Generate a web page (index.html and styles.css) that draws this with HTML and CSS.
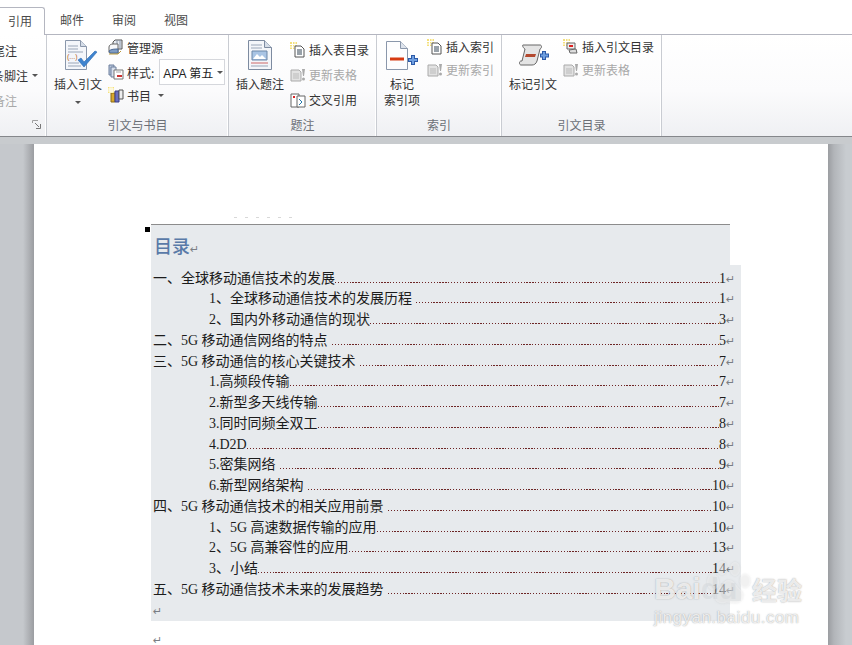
FILE: index.html
```html
<!DOCTYPE html>
<html lang="zh">
<head>
<meta charset="utf-8">
<title>目录</title>
<link rel="stylesheet" href="styles.css">
</head>
<body>
<div class="app">
  <nav class="tabs">
    <div class="tab active">引用</div>
    <div class="tab">邮件</div>
    <div class="tab">审阅</div>
    <div class="tab">视图</div>
  </nav>
  <section class="ribbon">
    <div class="group g1">
      <div class="group-body cut">
        <div class="cut-row">尾注</div>
        <div class="cut-row">下一条脚注<i class="caret"></i></div>
        <div class="cut-row off">显示备注</div>
      </div>
      <div class="group-label"><svg class="launcher" width="9" height="9" viewBox="0 0 9 9"><path d="M.5 3V.5H6" fill="none" stroke="#a0a0a0"/><path d="M3 3l4 4M8.500 4v4.500H4" fill="none" stroke="#777"/></svg></div>
    </div>
    <div class="group g2">
      <div class="group-body">
        <div class="big big-cite">
          <svg width="34" height="32" viewBox="0 0 34 32"><path d="M.5.500h15l6 6v23H.5z" fill="#f4f6fa" stroke="#8a97ab"/><path d="M15.500.500v6h6" fill="#d5dde8" stroke="#8a97ab"/><path d="M3 6h10M3 9h10M3 12h15M3 23h11M3 26h13" stroke="#9aa6b8"/><text x="2" y="19" class="mini">(...)</text><path d="M13 20l6 7 13-15-2-1-11 11-3-4z" fill="#3f84cf" stroke="#2a68b0" stroke-width=".6"/></svg>
          <span>插入引文</span>
          <i class="caret caret-big"></i>
        </div>
        <div class="col col-g2">
          <div class="item"><svg width="16" height="16" viewBox="0 0 16 16"><path d="M5 3l2-2h7v9H5z" fill="#e8ecf2" stroke="#555"/><path d="M9 1v9M12 1v9" stroke="#8a97ab"/><path d="M1 8c0-2 2-3 4-3h5v9H2c-1 0-1-1-1-2z" fill="#f7f8fa" stroke="#666"/><path d="M1 12c2-2 6-2 9-2v4H2z" fill="#7f9cc4" stroke="#4d6a94"/><path d="M1 15h9l3-3" fill="none" stroke="#b99a3c"/></svg><span class="t">管理源</span></div>
          <div class="item item-style"><svg width="16" height="16" viewBox="0 0 16 16"><path d="M1 1h5v10H1z" fill="#b8c6dc" stroke="#6d7f9c"/><path d="M3 3h5v10H3z" fill="#d7dfec" stroke="#6d7f9c"/><path d="M6 6h9v9H6z" fill="#fff" stroke="#777"/><path d="M8 8h5" stroke="#aaa"/><path d="M9 12h5" stroke="#c33" stroke-width="2"/></svg><span class="t">样式:</span><div class="combo">APA 第五<i class="caret"></i></div></div>
          <div class="item"><svg width="16" height="16" viewBox="0 0 16 16"><path d="M3 6h4v9H3z" fill="#d9a92c" stroke="#8a6a14"/><path d="M7 4h4v11H7z" fill="#6a6fc0" stroke="#3d3f85"/><path d="M11 3h4v9h-4z" fill="#eee" stroke="#555"/><path d="M0 0h6v6H0z" fill="#f5e27a"/><path d="M0 2h6M0 4h6M2 0v6M4 0v6" stroke="#fff"/></svg><span class="t">书目</span><i class="caret caret-gap"></i></div>
        </div>
      </div>
      <div class="group-label">引文与书目</div>
    </div>
    <div class="group g3">
      <div class="group-body">
        <div class="big big-cap">
          <svg width="24" height="30" viewBox="0 0 24 30"><path d="M.5.500h16l7 7v22H.5z" fill="#f4f6fa" stroke="#7d8ba0"/><path d="M16.500.500v7h7" fill="#d5dde8" stroke="#7d8ba0"/><path d="M3 5h11M3 8h11" stroke="#9aa6b8"/><path d="M4 11h15v9H4z" fill="#a9c4e4" stroke="#6d87a8"/><path d="M5 19l4-5 3 3 2-2 4 4z" fill="#fff"/><path d="M3 23h17" stroke="#c66"/><path d="M3 26h17" stroke="#9aa6b8"/></svg>
          <span>插入题注</span>
        </div>
        <div class="col col-g3">
          <div class="item"><svg width="16" height="16" viewBox="0 0 16 16"><use href="#star"/><path d="M5 4h6l3 3v8H5z" fill="#fff" stroke="#555"/><path d="M7 8h5M7 10h5M7 12h5" stroke="#345"/></svg><span class="t">插入表目录</span></div>
          <div class="item off"><svg width="16" height="16" viewBox="0 0 16 16"><use href="#upd"/></svg><span class="t">更新表格</span></div>
          <div class="item"><svg width="16" height="16" viewBox="0 0 16 16"><path d="M1 2h8v13H1z" fill="#fff" stroke="#666"/><path d="M7 4h8v11H7z" fill="#fff" stroke="#666"/><path d="M3 5h2" stroke="#d22" stroke-width="2"/><path d="M9 7l3 3-3 3" fill="none" stroke="#27a"/></svg><span class="t">交叉引用</span></div>
        </div>
      </div>
      <div class="group-label">题注</div>
    </div>
    <div class="group g4">
      <div class="group-body">
        <div class="big big-mark">
          <svg width="34" height="30" viewBox="0 0 34 30"><path d="M.5.500h14l7 7v21H.5z" fill="#fdfdfe" stroke="#8a97ab"/><path d="M14.500.500v7h7" fill="#dde3ec" stroke="#8a97ab"/><path d="M4 18h14" stroke="#d63a12" stroke-width="3"/><path d="M27 14v10M22 19h10" stroke="#2c5aa8" stroke-width="4"/><path d="M27 15v8M23 19h8" stroke="#6f9fe0" stroke-width="2"/></svg>
          <span>标记<br>索引项</span>
        </div>
        <div class="col col-short">
          <div class="item"><svg width="16" height="16" viewBox="0 0 16 16"><use href="#star"/><path d="M5 4h6l3 3v8H5z" fill="#fff" stroke="#555"/><path d="M7 8h5M7 10h5M7 12h5" stroke="#345"/></svg><span class="t">插入索引</span></div>
          <div class="item off"><svg width="16" height="16" viewBox="0 0 16 16"><use href="#upd"/></svg><span class="t">更新索引</span></div>
        </div>
      </div>
      <div class="group-label">索引</div>
    </div>
    <div class="group g5">
      <div class="group-body">
        <div class="big big-scroll">
          <svg width="31" height="22" viewBox="0 0 31 22"><path d="M4 1h17c2 0 2 3 0 4l-3 12c-1 3-3 4-5 4H2c-2 0-2-4 0-4h1l3-12c-2-1-3-4-2-4z" fill="#e4e4e4" stroke="#666"/><path d="M7 10h10l-1 3H6z" fill="#b3492f"/><path d="M25 7v9M21 11.500h9" stroke="#2c5aa8" stroke-width="4"/><path d="M25 8v7M22 11.500h7" stroke="#6f9fe0" stroke-width="2"/></svg>
          <span>标记引文</span>
        </div>
        <div class="col col-short col-cite">
          <div class="item"><svg width="16" height="16" viewBox="0 0 16 16"><use href="#star"/><path d="M4 4h8v6H4z" fill="#eee" stroke="#666"/><path d="M6 7h4" stroke="#d22" stroke-width="2"/><path d="M6 11l7-1 1 4H7z" fill="#ddd" stroke="#666"/></svg><span class="t">插入引文目录</span></div>
          <div class="item off"><svg width="16" height="16" viewBox="0 0 16 16"><use href="#upd"/></svg><span class="t">更新表格</span></div>
        </div>
      </div>
      <div class="group-label">引文目录</div>
    </div>
  </section>
  <main class="workspace">
    <article class="page">
      <div class="residue"></div>
      <div class="toc">
        <span class="anchor"></span>
        <h1 class="toc-title">目录<span class="mark">↵</span></h1>
        <div class="toc-rows">
          <div class="row"><span class="n">一、全球移动通信技术的发展</span><span class="dots"></span><span class="p">1</span><span class="mark">↵</span></div>
          <div class="row sub"><span class="n sp">1、全球移动通信技术的发展历程</span><span class="dots"></span><span class="p">1</span><span class="mark">↵</span></div>
          <div class="row sub"><span class="n">2、国内外移动通信的现状</span><span class="dots"></span><span class="p">3</span><span class="mark">↵</span></div>
          <div class="row"><span class="n sp">二、5G 移动通信网络的特点</span><span class="dots"></span><span class="p">5</span><span class="mark">↵</span></div>
          <div class="row"><span class="n sp">三、5G 移动通信的核心关键技术</span><span class="dots"></span><span class="p">7</span><span class="mark">↵</span></div>
          <div class="row sub"><span class="n">1.高频段传输</span><span class="dots"></span><span class="p">7</span><span class="mark">↵</span></div>
          <div class="row sub"><span class="n">2.新型多天线传输</span><span class="dots"></span><span class="p">7</span><span class="mark">↵</span></div>
          <div class="row sub"><span class="n">3.同时同频全双工</span><span class="dots"></span><span class="p">8</span><span class="mark">↵</span></div>
          <div class="row sub"><span class="n">4.D2D</span><span class="dots"></span><span class="p">8</span><span class="mark">↵</span></div>
          <div class="row sub"><span class="n sp">5.密集网络</span><span class="dots"></span><span class="p">9</span><span class="mark">↵</span></div>
          <div class="row sub"><span class="n sp">6.新型网络架构</span><span class="dots"></span><span class="p">10</span><span class="mark">↵</span></div>
          <div class="row"><span class="n sp">四、5G 移动通信技术的相关应用前景</span><span class="dots"></span><span class="p">10</span><span class="mark">↵</span></div>
          <div class="row sub"><span class="n">1、5G 高速数据传输的应用</span><span class="dots"></span><span class="p">10</span><span class="mark">↵</span></div>
          <div class="row sub"><span class="n">2、5G 高兼容性的应用</span><span class="dots"></span><span class="p">13</span><span class="mark">↵</span></div>
          <div class="row sub"><span class="n">3、小结</span><span class="dots"></span><span class="p">14</span><span class="mark">↵</span></div>
          <div class="row"><span class="n sp">五、5G 移动通信技术未来的发展趋势</span><span class="dots"></span><span class="p">14</span><span class="mark">↵</span></div>
        </div>
        <div class="toc-end"><span class="mark">↵</span></div>
      </div>
      <div class="after"><span class="mark">↵</span></div>
    </article>
  </main>
  <aside class="watermark">
    <svg class="wm-paw" width="46" height="48" viewBox="0 0 46 48"><ellipse cx="8" cy="22" rx="6" ry="8"/><ellipse cx="17" cy="8" rx="5" ry="7"/><ellipse cx="30" cy="9" rx="5" ry="7"/><ellipse cx="40" cy="21" rx="5.500" ry="7"/><path d="M24 20c5 0 7 6 12 10 5 5 1 14-7 13-3 0-6-1-9 0-9 2-13-7-8-12 4-4 6-11 12-11z"/></svg>
    <div class="wm-top"><span class="wm-bai">Bai<span class="wm-cut">du</span></span><span class="wm-jy">经验</span></div>
    <div class="wm-url">jingyan.baidu.com</div>
  </aside>
</div>
<svg class="defs" width="0" height="0">
  <defs>
    <g id="star"><path d="M0 0h7v7H0z" fill="#f4e07c"/><path d="M0 2.500h7M2.500 0v7M5 0v7M0 5h7" stroke="#fff"/></g>
    <g id="upd"><path d="M1 3h8l2 2v9H1z" fill="#e2e2e2" stroke="#aaa"/><path d="M3 7h6M3 9h6M3 11h6" stroke="#bbb"/><path d="M12 2h3l-1 7h-1z" fill="#aaa"/><circle cx="13.500" cy="12" r="1.500" fill="#aaa"/></g>
  </defs>
</svg>
</body>
</html>
```
FILE: styles.css
```css
* { box-sizing: border-box; }
html, body { margin: 0; padding: 0; }
body { width: 852px; height: 645px; overflow: hidden; font-family: "Noto Sans CJK SC", "Liberation Sans", sans-serif; font-size: 12px; color: #333; background: #c8cbd0; }
.app { position: relative; width: 852px; height: 645px; display: flex; flex-direction: column; overflow: hidden; }
.defs { position: absolute; }

.tabs { height: 35px; flex: none; display: flex; align-items: flex-end; background: #fff; border-bottom: 1px solid #b4b6c0; }
.tab { width: 52px; height: 27px; line-height: 26px; text-align: center; color: #4a4a4a; }
.tab:nth-child(2) { margin-left: 1px; }
.tab.active { width: 45px; height: 28px; margin-bottom: -1px; padding-right: 4px; line-height: 25px; background: #fff; border: 1px solid #b4b6c0; border-left: 0; border-bottom: 0; border-radius: 0 3px 0 0; }

.ribbon { height: 102px; flex: none; display: flex; background: linear-gradient(#fff 0%, #fbfbfc 55%, #eff0f3 100%); border-bottom: 1px solid #85878b; }
.group { display: flex; flex-direction: column; flex: none; border-right: 1px solid #c9ccd2; box-shadow: inset -1px 0 0 #fff; }
.group-body { flex: 1; display: flex; min-height: 0; }
.group-label { height: 21px; flex: none; line-height: 20px; text-align: center; color: #6b6f76; position: relative; }
.g1 { width: 47px; }
.g2 { width: 182px; }
.g3 { width: 148px; }
.g4 { width: 125px; }
.g5 { width: 160px; }

.cut { flex-direction: column; align-items: flex-end; overflow: hidden; padding: 3px 0 0; }
.cut-row { height: 25px; line-height: 22px; white-space: nowrap; color: #333; display: flex; align-items: center; padding-right: 8px; }
.cut-row:first-child { padding-right: 29px; }
.cut-row.off { padding-right: 29px; color: #a8a8a8; }
.launcher { position: absolute; right: 5px; top: 5px; }

.caret { display: inline-block; width: 0; height: 0; margin-left: 4px; border: 3px solid transparent; border-top: 3px solid #555; border-bottom: 0; }
.caret-big { margin: 9px 0 0; }
.caret-gap { margin-left: 7px; }

.big { flex: none; display: flex; flex-direction: column; align-items: center; text-align: center; line-height: 16px; color: #333; }
.big span { display: block; }
.big-cite { width: 48px; margin-left: 7px; padding-top: 5px; }
.big-cite svg { margin-left: 8px; margin-bottom: 4px; }
.big-cap { width: 48px; margin-left: 7px; padding-top: 5px; }
.big-cap svg { margin-bottom: 6px; }
.big-mark { width: 36px; margin-left: 7px; padding-top: 6px; }
.big-mark svg { margin-left: 2px; margin-bottom: 5px; }
.big-scroll { width: 48px; margin-left: 7px; padding-top: 9px; }
.big-scroll svg { margin-left: 3px; margin-bottom: 10px; }
.mini { font-family: "Liberation Sans", sans-serif; font-size: 7px; fill: #b4631c; }

.col { display: flex; flex-direction: column; flex: none; }
.col-g2 { margin-left: 6px; }
.col-g3 { margin-left: 6px; padding-top: 2px; }
.col-short { margin-left: 7px; }
.col-cite { margin-left: 6px; }
.item { display: flex; align-items: center; white-space: nowrap; color: #333; }
.col-g2 .item { height: 20px; }
.col-g2 .item:first-child { height: 24px; }
.col-g2 .item-style { height: 26px; }
.col-g3 .item { height: 25px; }
.col-short .item { height: 23px; }
.item.off { color: #a8a8a8; }
.t { margin-left: 3px; }
.combo { width: 66px; height: 26px; margin-left: 5px; padding-left: 3px; display: flex; align-items: center; background: #fff; border: 1px solid #d5d7dc; color: #222; white-space: nowrap; font-family: "Liberation Sans", "Noto Sans CJK SC", sans-serif; }

.workspace { flex: 1; min-height: 0; padding: 7px 0 0 34px; background: linear-gradient(90deg, #c5c8cc 0, #c5c8cc 23px, #9b9da1 34px, #9b9da1 828px, #b2b5b9 834px, #c8ccd0 846px) 0 7px no-repeat, #c8cbce; }
.page { width: 794px; height: 600px; padding: 80px 0 0 117px; background: #fff; position: relative; }
.residue { position: absolute; left: 200px; top: 73px; width: 60px; height: 1px; background: repeating-linear-gradient(90deg, #d8d8d8 0 3px, transparent 3px 11px); }
.toc { position: relative; width: 590px; font-family: "Liberation Serif", "Noto Sans CJK SC", serif; font-size: 14px; color: #1c1c1c; }
.anchor { position: absolute; left: -6px; top: 3px; width: 5px; height: 5px; background: #000; }
.toc-title { width: 579px; height: 41px; margin: 0; padding: 7px 0 0 3px; background: #e7eaed; border-top: 1px solid #8c8c8c; font-family: "Noto Sans CJK SC", serif; font-size: 18px; font-weight: 500; line-height: 27px; color: #5a7aa8; }
.toc-rows { background: #e7eaed; padding-top: 3.500px; }
.row { height: 20.75px; display: flex; align-items: baseline; padding: 0 6px 0 2px; line-height: 20.75px; white-space: nowrap; }
.row.sub { padding-left: 58px; }
.n { flex: none; }
.n.sp { margin-right: 4px; }
.dots { flex: 1; height: 1px; min-width: 0; margin-bottom: 1px; background: repeating-linear-gradient(90deg, #6d2525 0 1.300px, transparent 1.300px 2.900px); }
.p { flex: none; }
.mark { display: inline-block; width: 9px; font-family: "DejaVu Sans", sans-serif; font-size: 11px; font-weight: 400; color: #7a7e84; }
.toc-end { width: 579px; height: 20.500px; padding-left: 2px; line-height: 20px; background: #e7eaed; }
.after { padding: 12px 0 0 2px; line-height: 12px; }

.watermark { position: absolute; left: 654px; top: 572px; width: 160px; color: rgba(255, 255, 255, .8); font-family: "Liberation Sans", sans-serif; text-shadow: 0 0 1px rgba(120, 120, 120, .6), 0 0 2px rgba(170, 170, 170, .4); pointer-events: none; }
.wm-top { position: relative; display: flex; align-items: flex-end; height: 34px; }
.wm-bai { font-size: 30px; font-weight: 700; line-height: 34px; }
.wm-cut { color: rgba(200, 205, 210, .35); text-shadow: none; }
.wm-paw { position: absolute; left: 51px; top: -12px; fill: rgba(255, 255, 255, .35); filter: drop-shadow(0 0 1px rgba(130, 130, 130, .5)); }
.wm-jy { position: absolute; left: 98px; top: 0; font-family: "Noto Sans CJK SC", sans-serif; font-size: 25px; font-weight: 700; line-height: 34px; }
.wm-url { margin-top: 3px; font-size: 17px; line-height: 18px; letter-spacing: .5px; }
```
